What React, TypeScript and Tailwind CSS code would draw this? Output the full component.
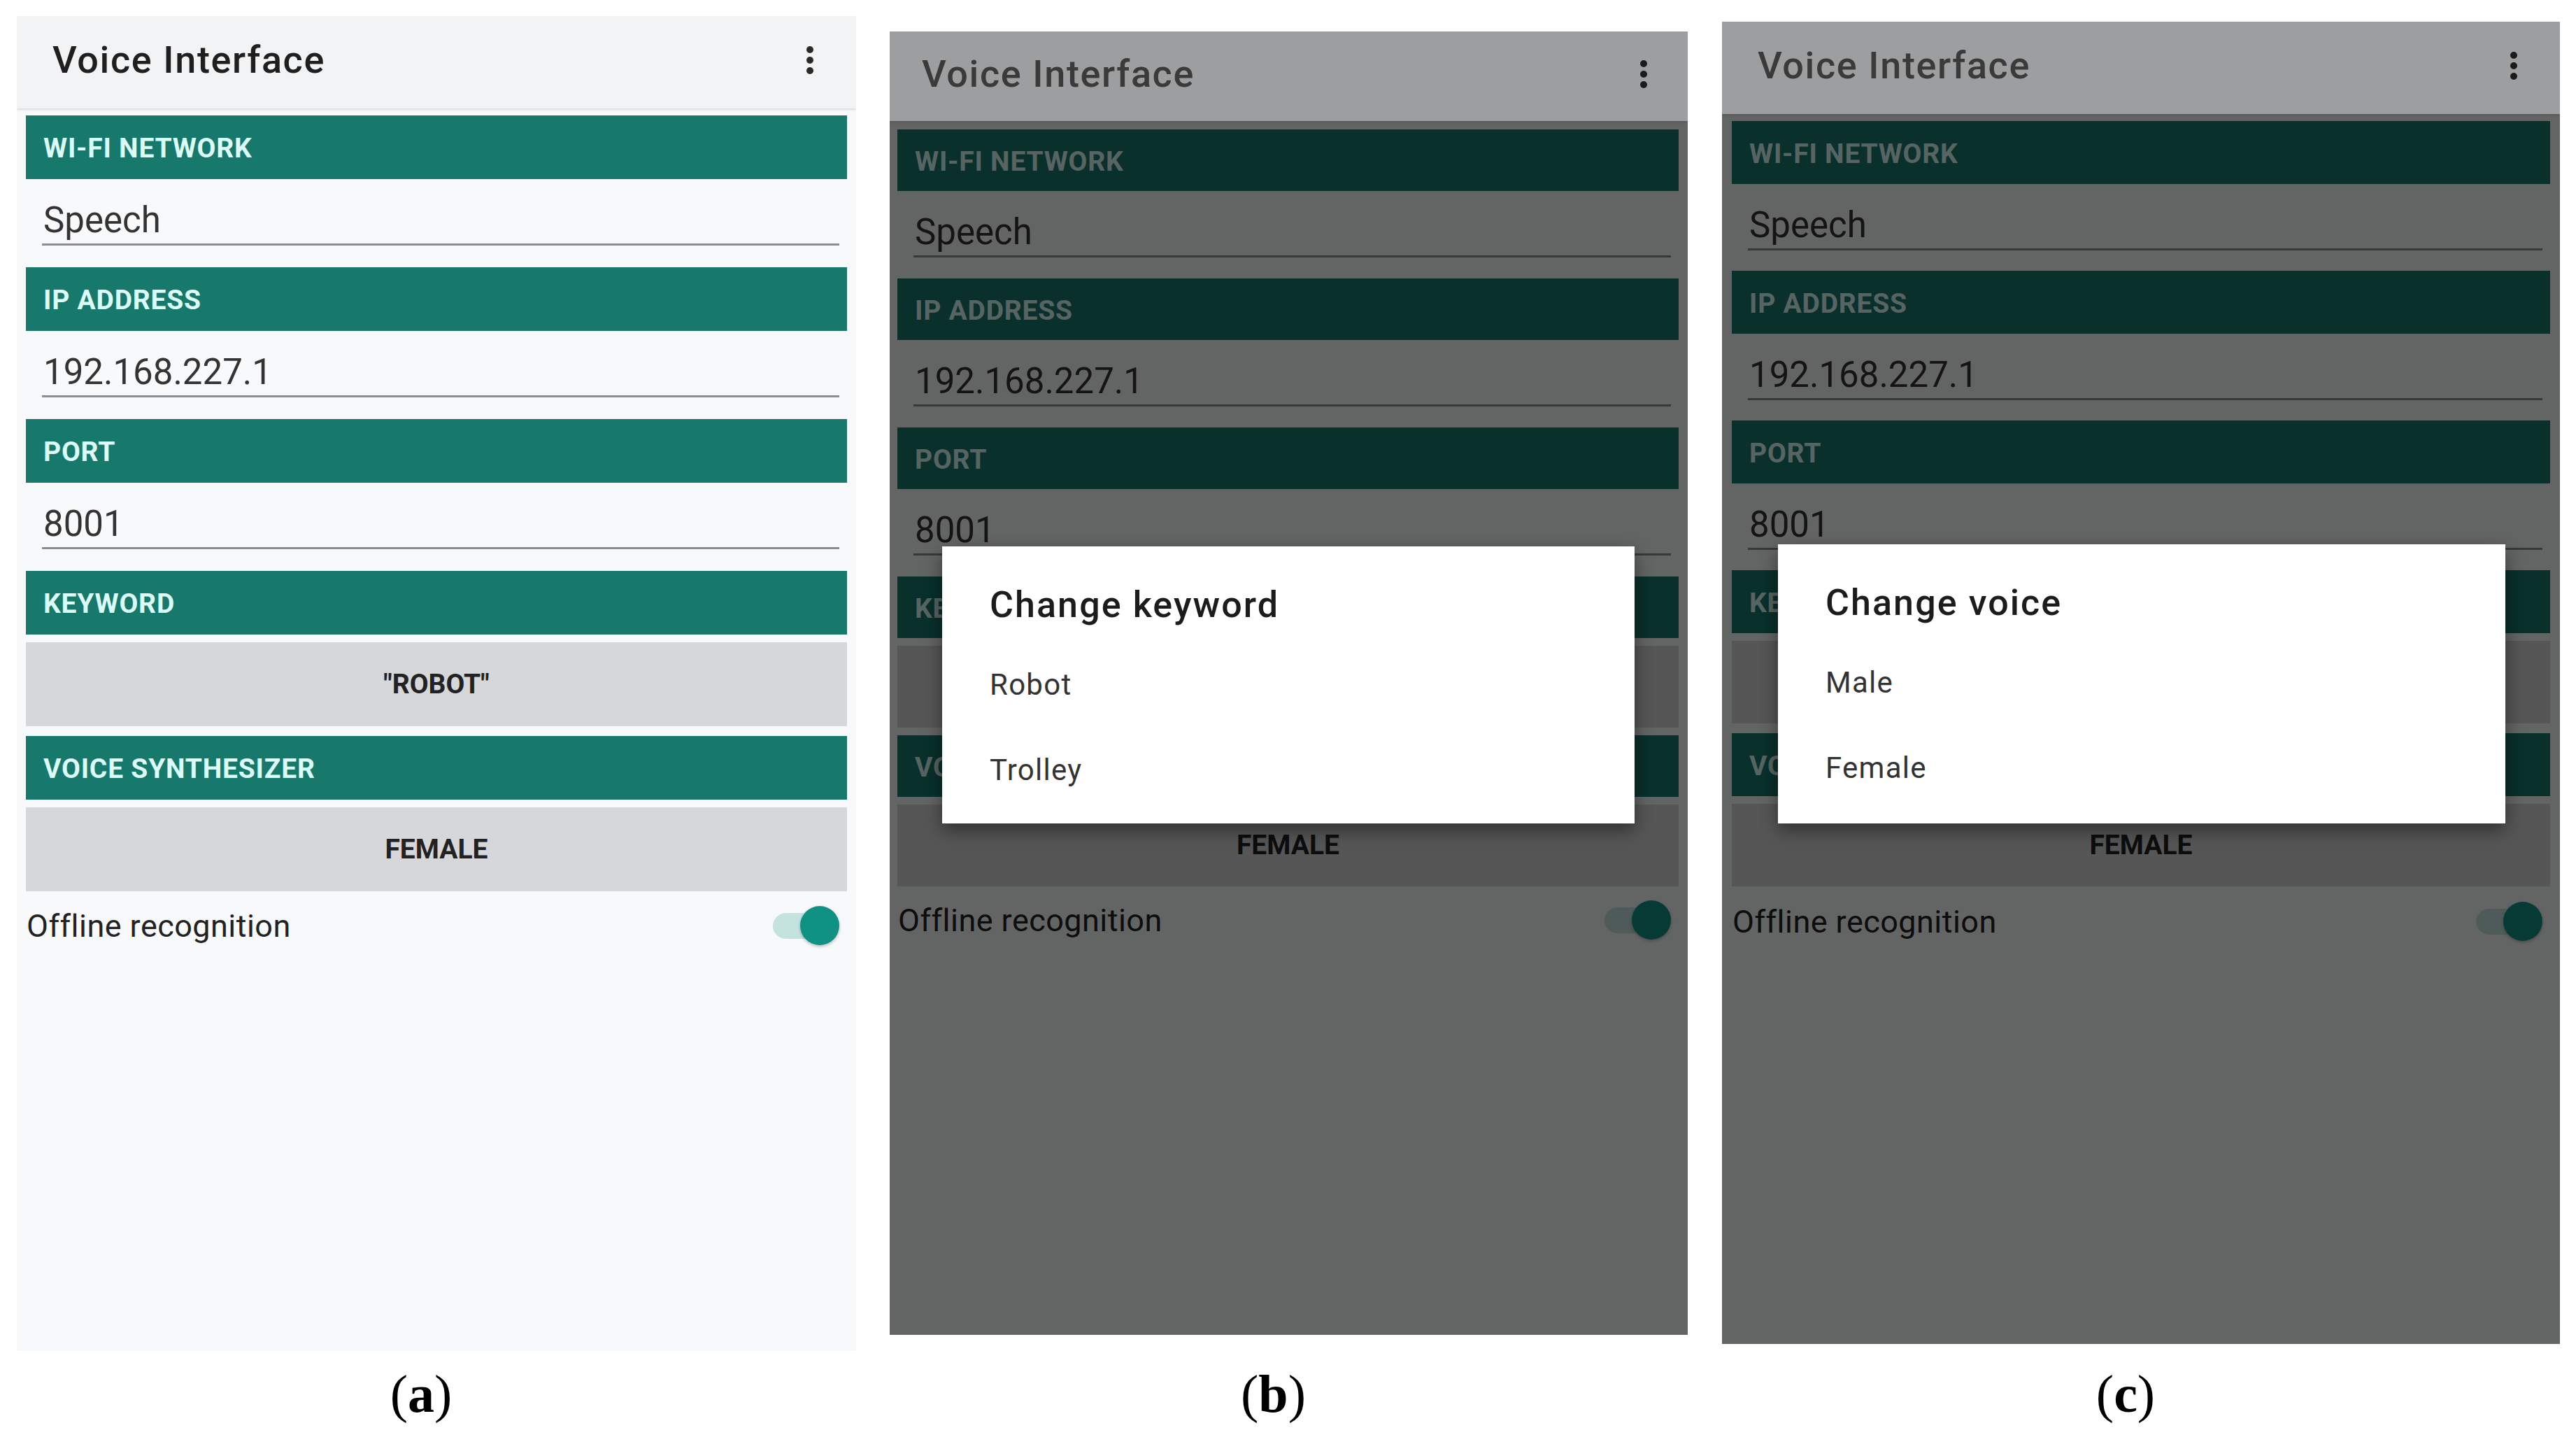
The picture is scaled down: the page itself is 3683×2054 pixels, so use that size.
import React from 'react';

type Size = {
  panel: string;
  header: string;
  title: string;
  content: string;
  bar: string;
  field: string;
  btn: string;
  gapBtn: string;
  gapBar: string;
  row: string;
  scrimHead: string;
  scrimBody: string;
};

// per-screenshot sizes (the three captures were scaled slightly differently)
const SIZE_A: Size = {
  panel: 'w-[1200px] h-[1908px] mt-[23px]',
  header: 'h-[132px] pl-[51px] pr-[61px]',
  title: 'text-[#1f1f1f]',
  content: 'pt-[10px] px-[13px]',
  bar: 'h-[91px]',
  field: 'h-[126px]',
  btn: 'h-[120px]',
  gapBtn: 'mt-[11px]',
  gapBar: 'mt-[14px]',
  row: 'h-[98px]',
  scrimHead: 'h-[132px]',
  scrimBody: 'top-[132px]',
};

const SIZE_B: Size = {
  panel: 'w-[1141px] h-[1863px] mt-[45px] ml-[48px]',
  header: 'h-[128px] pl-[46px] pr-[58px]',
  title: 'text-[#5a5a5a]',
  content: 'pt-[12px] pl-[11px] pr-[13px]',
  bar: 'h-[88px]',
  field: 'h-[125px]',
  btn: 'h-[117px]',
  gapBtn: 'mt-[11px]',
  gapBar: 'mt-[11px]',
  row: 'h-[96px]',
  scrimHead: 'h-[128px]',
  scrimBody: 'top-[128px]',
};

const SIZE_C: Size = {
  panel: 'w-[1198px] h-[1890px] mt-[31px] ml-[49px]',
  header: 'h-[132px] pl-[51px] pr-[61px]',
  title: 'text-[#5a5a5a]',
  content: 'pt-[10px] px-[14px]',
  bar: 'h-[90px]',
  field: 'h-[124px]',
  btn: 'h-[118px]',
  gapBtn: 'mt-[11px]',
  gapBar: 'mt-[14px]',
  row: 'h-[100px]',
  scrimHead: 'h-[132px]',
  scrimBody: 'top-[132px]',
};

type Dialog = {
  title: string;
  items: string[];
  pos: string;
};

const SectionBar: React.FC<{ label: string; s: Size; className?: string }> = ({ label, s, className = '' }) => (
  <div className={`flex items-center pt-[4px] pl-[25px] bg-[#17796b] ${s.bar} ${className}`}>
    <span className="text-[39px] leading-none font-bold tracking-[0.02em] text-[#dcfbf6]">{label}</span>
  </div>
);

const Field: React.FC<{ value: string; s: Size }> = ({ value, s }) => (
  <div className={`flex flex-col pt-[33px] pl-[23px] pr-[11px] ${s.field}`}>
    <span className="pl-[2px] text-[51px] leading-none h-[50px] text-[#333333]">{value}</span>
    <div className="mt-[9px] h-[3px] bg-[#8d8d8f]" />
  </div>
);

const GrayButton: React.FC<{ text: string; s: Size; className?: string }> = ({ text, s, className = '' }) => (
  <div className={`flex items-center justify-center bg-[#d6d7d9] ${s.btn} ${className}`}>
    <span className="text-[39px] leading-none font-bold text-[#222222]">{text}</span>
  </div>
);

const Phone: React.FC<{ s: Size; dialog?: Dialog }> = ({ s, dialog }) => (
  <div className={`relative flex flex-col shrink-0 overflow-hidden bg-[#f8f9fb] ${s.panel}`}>
    {/* app bar */}
    <div
      className={`flex items-center justify-between pb-[6px] bg-[#f2f3f5] shadow-[0_2px_3px_rgba(0,0,0,0.12)] ${s.header}`}
    >
      <span className={`text-[54px] leading-none font-medium tracking-[0.03em] ${s.title}`}>Voice Interface</span>
      <div className="flex flex-col gap-[5px]">
        <div className="w-[10px] h-[10px] rounded-full bg-[#2a2a2a]" />
        <div className="w-[10px] h-[10px] rounded-full bg-[#2a2a2a]" />
        <div className="w-[10px] h-[10px] rounded-full bg-[#2a2a2a]" />
      </div>
    </div>

    {/* settings list */}
    <div className={`flex flex-col ${s.content}`}>
      <SectionBar label="WI-FI NETWORK" s={s} />
      <Field value="Speech" s={s} />
      <SectionBar label="IP ADDRESS" s={s} />
      <Field value="192.168.227.1" s={s} />
      <SectionBar label="PORT" s={s} />
      <Field value="8001" s={s} />
      <SectionBar label="KEYWORD" s={s} />
      <GrayButton text={'"ROBOT"'} s={s} className={s.gapBtn} />
      <SectionBar label="VOICE SYNTHESIZER" s={s} className={s.gapBar} />
      <GrayButton text="FEMALE" s={s} className={s.gapBtn} />
      <div className={`flex items-center justify-between pl-[1px] pr-[11px] ${s.row}`}>
        <span className="text-[45px] leading-none tracking-[0.01em] text-[#222222]">Offline recognition</span>
        <div className="flex items-center">
          <div className="w-[85px] h-[37px] rounded-full bg-[#c4e3df]" />
          <div className="-ml-[46px] w-[56px] h-[56px] rounded-full bg-[#0f9284] shadow-[0_2px_4px_rgba(0,0,0,0.25)]" />
        </div>
      </div>
    </div>

    {dialog && (
      <>
        <div className={`absolute inset-x-0 top-0 bg-black/35 ${s.scrimHead}`} />
        <div className={`absolute inset-x-0 bottom-0 bg-black/60 ${s.scrimBody}`} />
        <div
          className={`absolute flex flex-col pt-[58px] pl-[68px] bg-white shadow-[0_10px_24px_rgba(0,0,0,0.45)] ${dialog.pos}`}
        >
          <span className="text-[52px] leading-none font-medium tracking-[0.04em] text-[#1c1c1c]">{dialog.title}</span>
          <div className="flex flex-col mt-[67px] gap-[80px]">
            {dialog.items.map(item => (
              <span key={item} className="text-[42px] leading-none tracking-[0.03em] text-[#333333]">
                {item}
              </span>
            ))}
          </div>
        </div>
      </>
    )}
  </div>
);

const Caption: React.FC<{ letter: string; width: string }> = ({ letter, width }) => (
  <div className={`flex justify-center pr-[44px] shrink-0 ${width}`}>
    <span className="font-['Liberation_Serif',serif] text-[76px] leading-none text-black">
      (<span className="font-bold">{letter}</span>)
    </span>
  </div>
);

const App: React.FC = () => {
  return (
    <div className="w-[3683px] h-[2054px] overflow-hidden bg-white font-['Roboto','Noto_Sans',sans-serif]">
      <div className="flex items-start h-[1931px] pl-[24px]">
        <Phone s={SIZE_A} />
        <Phone
          s={SIZE_B}
          dialog={{
            title: 'Change keyword',
            items: ['Robot', 'Trolley'],
            pos: 'left-[75px] top-[736px] w-[990px] h-[396px]',
          }}
        />
        <Phone
          s={SIZE_C}
          dialog={{
            title: 'Change voice',
            items: ['Male', 'Female'],
            pos: 'left-[80px] top-[747px] w-[1040px] h-[399px]',
          }}
        />
      </div>
      <div className="flex pl-[24px] mt-[23px]">
        <Caption letter="a" width="w-[1200px]" />
        <Caption letter="b" width="w-[1141px] ml-[48px]" />
        <Caption letter="c" width="w-[1198px] ml-[49px]" />
      </div>
    </div>
  );
};

export default App;
